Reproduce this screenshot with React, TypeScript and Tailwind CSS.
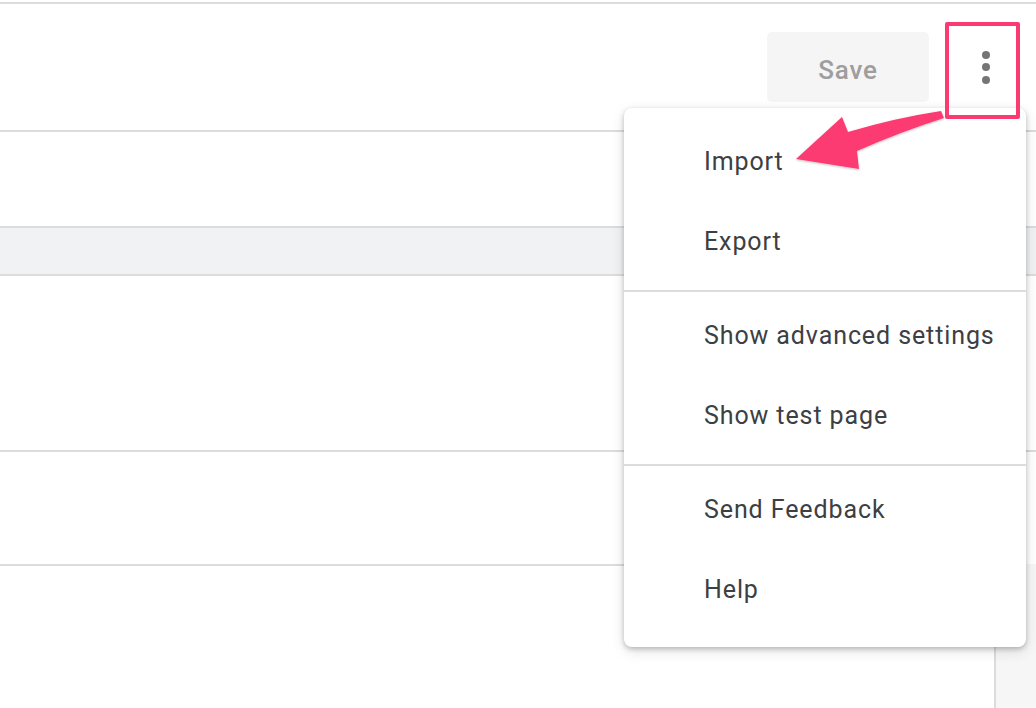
import React from "react";

const font = { fontFamily: "Roboto, 'Noto Sans', Arial, sans-serif" };

function Line() {
  return <div className="h-[2px] bg-[#dcdcdc]" />;
}

export default function App() {
  return (
    <div className="relative w-[1036px] h-[708px] overflow-hidden bg-white" style={font}>
      <div className="flex flex-col h-full">
        <div className="h-[2px] bg-white" />
        <Line />
        <div className="h-[126px] flex items-center justify-end pr-[26px]">
          <button className="w-[162px] h-[70px] rounded-[5px] bg-[#f5f5f5] text-[#9e9e9e] text-[26px] font-medium tracking-[0.8px] pt-[6px]">
            Save
          </button>
          <div className="w-[48px] h-[48px] ml-[33px] flex flex-col items-center justify-center gap-[4.5px]">
            <span className="w-[8px] h-[8px] rounded-full bg-[#757575]" />
            <span className="w-[8px] h-[8px] rounded-full bg-[#757575]" />
            <span className="w-[8px] h-[8px] rounded-full bg-[#757575]" />
          </div>
        </div>
        <Line />
        <div className="h-[94px]" />
        <Line />
        <div className="h-[46px] bg-[#f1f2f4]" />
        <Line />
        <div className="h-[174px]" />
        <Line />
        <div className="h-[112px]" />
        <div className="flex flex-1">
          <div className="flex-1 flex flex-col">
            <Line />
          </div>
          <div className="w-[42px] border-l-2 border-[#dcdcdc] bg-[#f6f6f6]" />
        </div>
      </div>

      {/* Menu */}
      <div className="absolute left-[624px] top-[108px] w-[402px] rounded-[8px] bg-white pt-[14px] pb-[17px] shadow-[0_2px_5px_rgba(0,0,0,0.22),0_4px_14px_rgba(0,0,0,0.12)] text-[#3c4043] text-[25px] tracking-[0.9px]">
        <div className="h-[80px] flex items-center pl-[80px]">Import</div>
        <div className="h-[80px] flex items-center pl-[80px]">Export</div>
        <div className="mt-[8px] mb-[4px] h-[2px] bg-[#dcdcdc]" />
        <div className="h-[80px] flex items-center pl-[80px]">Show advanced settings</div>
        <div className="h-[80px] flex items-center pl-[80px]">Show test page</div>
        <div className="mt-[8px] mb-[4px] h-[2px] bg-[#dcdcdc]" />
        <div className="h-[80px] flex items-center pl-[80px]">Send Feedback</div>
        <div className="h-[80px] flex items-center pl-[80px]">Help</div>
      </div>

      {/* Annotation box */}
      <div className="absolute left-[945px] top-[22px] w-[75px] h-[97px] border-[4px] border-[#fc3a72] rounded-[2px]" />

      {/* Annotation arrow */}
      <svg className="absolute left-0 top-0" width="1036" height="708" viewBox="0 0 1036 708">
        <defs>
          <filter id="sh" x="-20%" y="-20%" width="140%" height="140%">
            <feDropShadow dx="0" dy="1" stdDeviation="1.2" floodColor="#000" floodOpacity="0.25" />
          </filter>
        </defs>
        <path
          d="M796 159 L842 117 L848 132 Q895 118 941 111 L944 118 Q900 132 857 151 L859 169 Z"
          fill="#fc3a72"
          filter="url(#sh)"
        />
      </svg>
    </div>
  );
}
